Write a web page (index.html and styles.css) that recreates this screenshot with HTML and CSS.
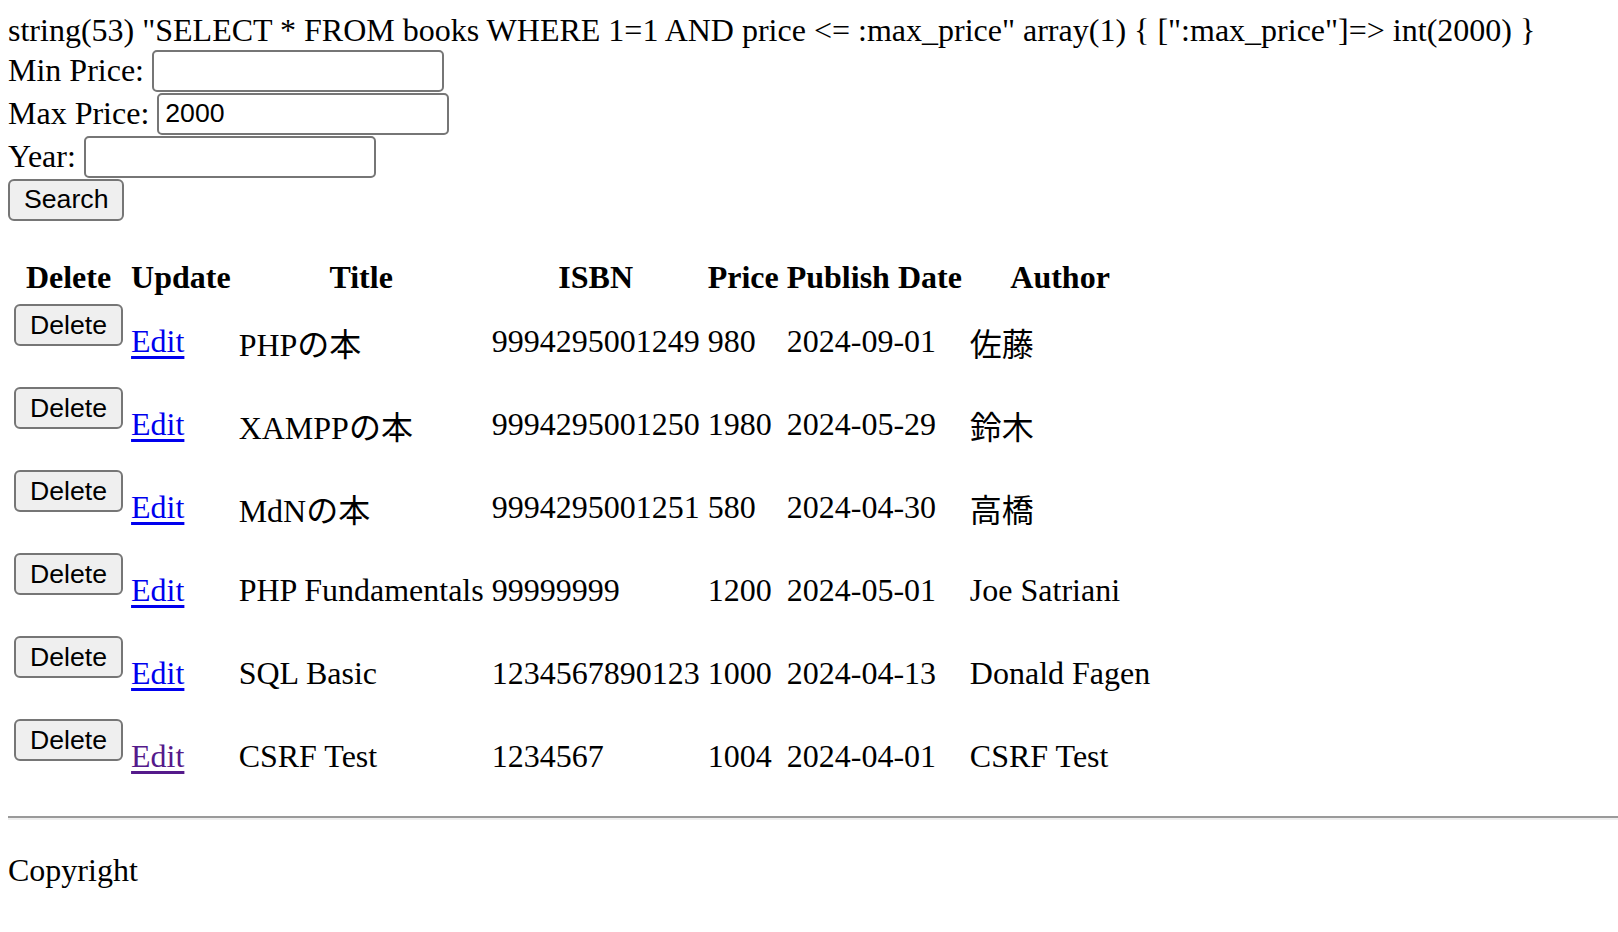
FILE: index.html
```html
<!DOCTYPE html>
<html lang="ja">
<head>
<meta charset="utf-8">
<title>Books</title>
<link rel="stylesheet" href="styles.css">
</head>
<body>
<div class="dump">string(53) "SELECT * FROM books WHERE 1=1 AND price &lt;= :max_price" array(1) { [":max_price"]=&gt; int(2000) }</div>
<form class="search">
  <div class="field">Min Price: <input type="text" class="txt"></div>
  <div class="field">Max Price: <input type="text" class="txt" value="2000"></div>
  <div class="field">Year: <input type="text" class="txt"></div>
  <div class="field"><button type="button" class="btn">Search</button></div>
</form>
<table class="books">
  <thead>
    <tr><th>Delete</th><th>Update</th><th>Title</th><th>ISBN</th><th>Price</th><th>Publish Date</th><th>Author</th></tr>
  </thead>
  <tbody>
    <tr>
      <td><form class="del"><button type="button" class="btn">Delete</button></form></td>
      <td><a class="link" href="#">Edit</a></td>
      <td>PHPの本</td><td>9994295001249</td><td>980</td><td>2024-09-01</td><td>佐藤</td>
    </tr>
    <tr>
      <td><form class="del"><button type="button" class="btn">Delete</button></form></td>
      <td><a class="link" href="#">Edit</a></td>
      <td>XAMPPの本</td><td>9994295001250</td><td>1980</td><td>2024-05-29</td><td>鈴木</td>
    </tr>
    <tr>
      <td><form class="del"><button type="button" class="btn">Delete</button></form></td>
      <td><a class="link" href="#">Edit</a></td>
      <td>MdNの本</td><td>9994295001251</td><td>580</td><td>2024-04-30</td><td>高橋</td>
    </tr>
    <tr>
      <td><form class="del"><button type="button" class="btn">Delete</button></form></td>
      <td><a class="link" href="#">Edit</a></td>
      <td>PHP Fundamentals</td><td>99999999</td><td>1200</td><td>2024-05-01</td><td>Joe Satriani</td>
    </tr>
    <tr>
      <td><form class="del"><button type="button" class="btn">Delete</button></form></td>
      <td><a class="link" href="#">Edit</a></td>
      <td>SQL Basic</td><td>1234567890123</td><td>1000</td><td>2024-04-13</td><td>Donald Fagen</td>
    </tr>
    <tr>
      <td><form class="del"><button type="button" class="btn">Delete</button></form></td>
      <td><a class="link visited" href="#">Edit</a></td>
      <td>CSRF Test</td><td>1234567</td><td>1004</td><td>2024-04-01</td><td>CSRF Test</td>
    </tr>
  </tbody>
</table>
<hr class="rule">
<p class="footer">Copyright</p>
</body>
</html>
```
FILE: styles.css
```css
html, body {
  background: #ffffff;
}
body {
  margin: 12px 0 8px 8px;
  font-family: "Liberation Serif", "Noto Sans CJK JP", serif;
  font-size: 32px;
  color: #000000;
}
.dump {
  white-space: nowrap;
}
.search {
  margin: 0 0 32px;
}
.field {
  height: 43px;
  display: flex;
  align-items: center;
  white-space: pre;
}
.txt {
  box-sizing: border-box;
  width: 292px;
  height: 42px;
  margin: 0;
  padding: 2px 6px;
  border: 2px solid #767676;
  border-radius: 5px;
  font-family: "Liberation Sans", Arial, sans-serif;
  font-size: 26.67px;
  color: #000;
  background: #fff;
}
.btn {
  box-sizing: border-box;
  height: 42px;
  margin: 0;
  padding: 0 14px;
  border: 2px solid #767676;
  border-radius: 6px;
  background: #efefef;
  font-family: "Liberation Sans", Arial, sans-serif;
  font-size: 26.67px;
  color: #000;
}
.books {
  border-collapse: separate;
  border-spacing: 4px;
  margin-left: 0;
}
.books th, .books td {
  padding: 2px;
  white-space: nowrap;
}
.books th {
  font-weight: bold;
  text-align: center;
}
.books td {
  text-align: left;
  vertical-align: middle;
}
.del {
  margin: 0 0 33px;
}
.link {
  color: #0000ee;
  text-decoration: underline;
  text-underline-offset: 4px;
  text-decoration-thickness: 3px;
}
.link.visited {
  color: #551a8b;
}
.rule {
  height: 0;
  margin: 16px 0;
  border: none;
  border-top: 2px solid #9a9a9a;
  border-bottom: 2px solid #eeeeee;
}
.footer {
  margin: 32px 0;
}
```
